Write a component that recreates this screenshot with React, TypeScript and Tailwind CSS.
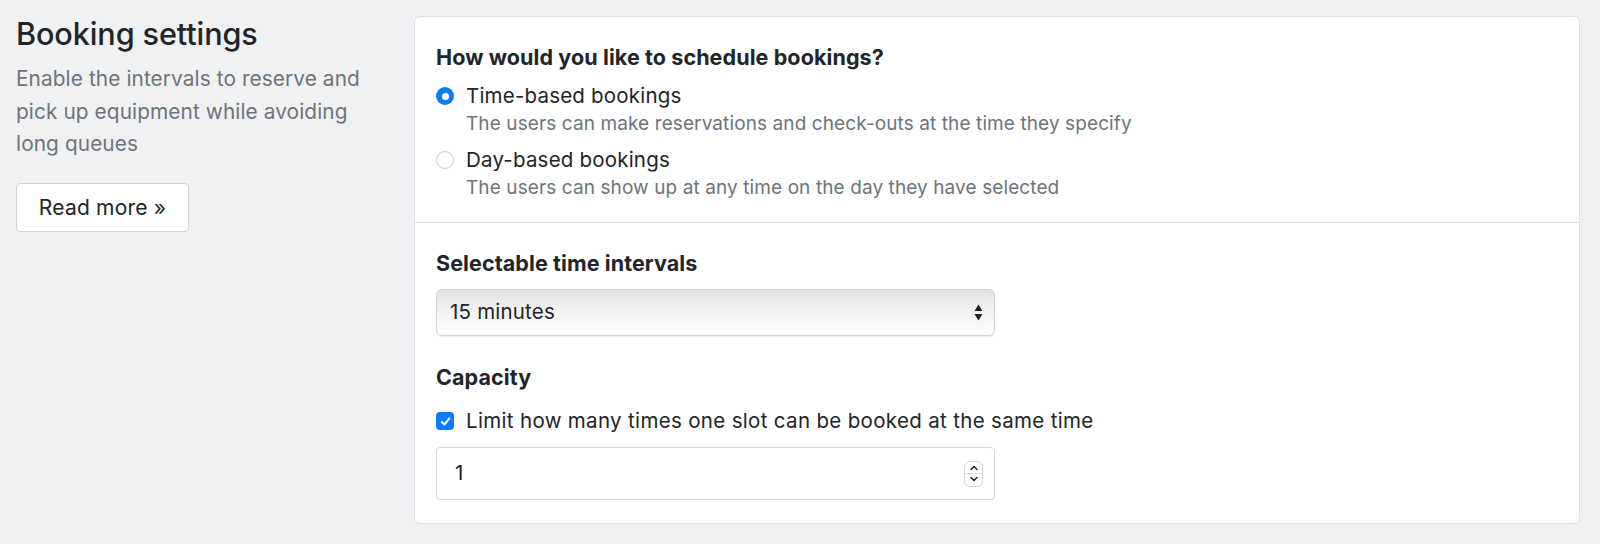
import React from "react";

const font = { fontFamily: '"Inter", "Liberation Sans", sans-serif' };

function Radio({ checked }: { checked: boolean }) {
  return checked ? (
    <span className="flex h-[18px] w-[18px] shrink-0 items-center justify-center rounded-full bg-[#0b7bff]">
      <span className="h-[7px] w-[7px] rounded-full bg-white" />
    </span>
  ) : (
    <span className="h-[18px] w-[18px] shrink-0 rounded-full border border-[#cbcbcb] bg-white shadow-[inset_0_1px_1px_rgba(0,0,0,0.05)]" />
  );
}

function Check() {
  return (
    <span className="flex h-[18px] w-[18px] shrink-0 items-center justify-center rounded-[4px] bg-[#0b7bff]">
      <svg width="13" height="13" viewBox="0 0 12 12" fill="none">
        <path d="M2.6 6.4 L5 8.8 L9.5 3.2" stroke="white" strokeWidth="1.9" strokeLinecap="round" strokeLinejoin="round" />
      </svg>
    </span>
  );
}

const options = [
  {
    label: "Time-based bookings",
    hint: "The users can make reservations and check-outs at the time they specify",
    checked: true,
  },
  {
    label: "Day-based bookings",
    hint: "The users can show up at any time on the day they have selected",
    checked: false,
  },
];

export default function App() {
  return (
    <div className="min-h-[544px] bg-[#f0f1f3] text-[#212529]" style={font}>
      <div className="flex gap-4 pl-4 pr-5 pt-4">
        {/* Left description column */}
        <div className="w-[382px] shrink-0">
          <h1 className="text-[30.6px] leading-[36px] font-medium tracking-[-0.1px]">Booking settings</h1>
          <p className="mt-[11px] w-[356px] text-[20.8px] leading-[32.5px] tracking-[0.1px] text-[#6c757d]">
            Enable the intervals to reserve and pick up equipment while avoiding long queues
          </p>
          <button className="mt-[22.5px] h-[49px] w-[173px] rounded-[4px] border border-[#cfd2d6] bg-white text-[21px] tracking-[0.2px] text-[#212529]">
            Read more »
          </button>
        </div>

        {/* Settings card */}
        <div className="flex-1 rounded-[6px] border border-[#dfe1e4] bg-white">
          <div className="px-[21px] pt-[25px] pb-[22px]">
            <h2 className="text-[21.5px] leading-[30px] font-bold tracking-[0.1px]">
              How would you like to schedule bookings?
            </h2>
            <div className="mt-[9px] flex flex-col gap-[9px]">
              {options.map((o) => (
                <div key={o.label}>
                  <label className="flex items-center gap-[12px] text-[20.5px] leading-[30px] tracking-[0.2px]">
                    <Radio checked={o.checked} />
                    {o.label}
                  </label>
                  <p className="ml-[30px] text-[19px] leading-[25px] tracking-[0.1px] text-[#6c757d]">{o.hint}</p>
                </div>
              ))}
            </div>
          </div>

          <div className="border-t border-[#dfe1e4] px-[21px] pt-[25px] pb-[23px]">
            <h2 className="text-[21.5px] leading-[30px] font-bold tracking-[0.1px]">Selectable time intervals</h2>
            <div className="mt-[11px] flex h-[47px] w-[559px] items-center justify-between rounded-[6px] border border-[#d3d3d3] bg-gradient-to-b from-[#e2e2e2] via-[#f3f3f3] to-white pl-[13px] pr-[11px] shadow-[0_1px_1px_rgba(0,0,0,0.08)]">
              <span className="text-[20.5px] tracking-[0.2px]">15 minutes</span>
              <svg width="9" height="19" viewBox="0 0 9 19">
                <path d="M4.5 1.5 L8.5 8 L0.5 8 Z" fill="#1e1e1e" />
                <path d="M4.5 17.5 L8.5 11 L0.5 11 Z" fill="#1e1e1e" />
              </svg>
            </div>

            <h2 className="mt-[26px] text-[21.5px] leading-[30px] font-bold tracking-[0.1px]">Capacity</h2>
            <label className="mt-[14px] flex items-center gap-[12px] text-[20.5px] leading-[30px] tracking-[0.33px]">
              <Check />
              Limit how many times one slot can be booked at the same time
            </label>
            <div className="mt-[11px] flex h-[53px] w-[559px] items-center justify-between rounded-[4px] border border-[#d6d8db] bg-white pl-[18px] pr-[11px]">
              <span className="text-[20.5px]">1</span>
              <span className="flex h-[26px] w-[19px] flex-col items-center justify-center rounded-[6px] border border-[#d5d5d5] bg-white">
                <svg width="10" height="8" viewBox="0 0 10 8">
                  <path d="M2 5.5 L5 2.5 L8 5.5" stroke="#222" strokeWidth="1.5" fill="none" strokeLinecap="round" strokeLinejoin="round" />
                </svg>
                <span className="my-[1px] h-px w-[17px] bg-[#e3e3e3]" />
                <svg width="10" height="8" viewBox="0 0 10 8">
                  <path d="M2 2.5 L5 5.5 L8 2.5" stroke="#222" strokeWidth="1.5" fill="none" strokeLinecap="round" strokeLinejoin="round" />
                </svg>
              </span>
            </div>
          </div>
        </div>
      </div>
    </div>
  );
}
